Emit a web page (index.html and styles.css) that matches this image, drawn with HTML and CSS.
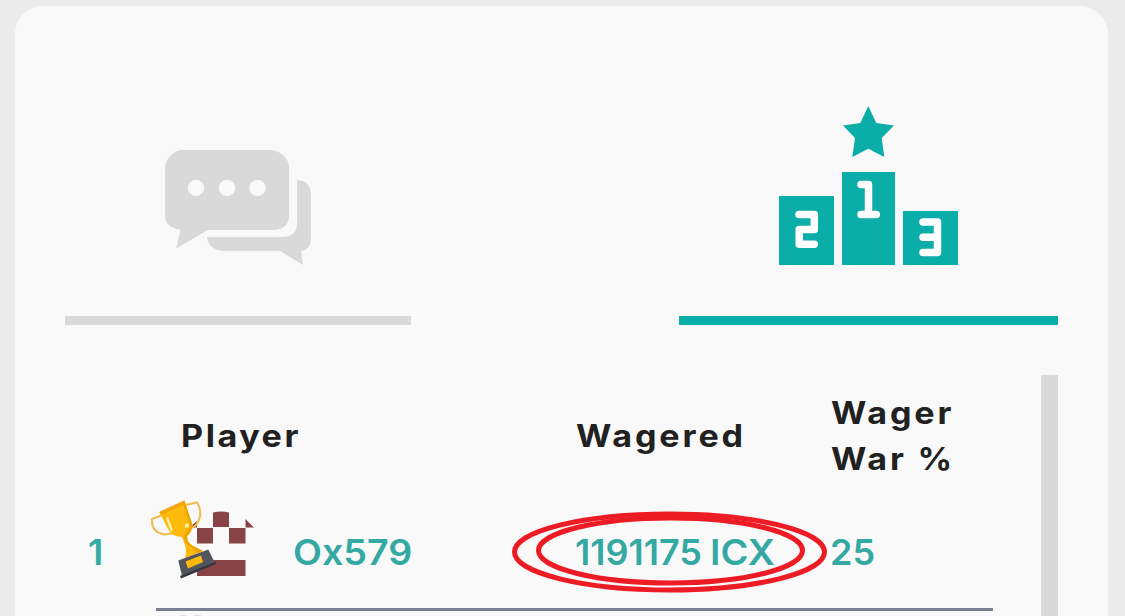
FILE: index.html
```html
<!DOCTYPE html>
<html lang="en">
<head>
<meta charset="utf-8">
<title>Leaderboard</title>
<link rel="stylesheet" href="styles.css">
</head>
<body>
<main class="card">
  <nav class="tabs">
    <a class="tab tab-chat">
      <svg class="icon" width="146" height="115" viewBox="0 0 146 115" fill="#d9d9d9">
        <path d="M17 0H107Q114 1 119 6Q124 11 124 17V66Q124 78 110 80H43L11 98.500L15.500 80Q0 77 0 66V17Q1 10 6 5Q11 0 17 0Z"/>
        <path d="M132 30Q146 31 146 45V89Q146 99 136 101L138 115L115 101H57Q43 99 42 87H119Q132 86 132 73Z"/>
        <g fill="#f9f9f9"><circle cx="31" cy="38" r="8.200"/><circle cx="62" cy="38" r="8.200"/><circle cx="92.500" cy="38" r="8.200"/></g>
      </svg>
    </a>
    <a class="tab tab-rank">
      <svg class="icon" width="179" height="159" viewBox="0 0 179 159" fill="#0bada9">
        <path d="M89.300 0L97.300 17L115 19.500L102.700 32L105.300 51L89.300 42.700L73.300 51L76 32L64 19.500L81.300 17Z"/>
        <path d="M0 90H55V159H0ZM63 66H116V159H63ZM124 105H179V159H124Z"/>
        <g fill="none" stroke="#fff" stroke-width="7.500" stroke-linecap="round" stroke-linejoin="round">
          <path d="M20 108.500H35.300V123.500H20.200V138.300H35.300"/>
          <path d="M82 78.500H89.500V108M82 108.500H97.300"/>
          <path d="M144 116H158.500V146.500H144M144 131.300H158"/>
        </g>
      </svg>
    </a>
  </nav>
  <section class="panel">
    <div class="table">
      <div class="row head">
        <span></span>
        <div class="cells">
          <span class="h-player">Player</span><span class="h-wagered">Wagered</span><span class="h-war">Wager<br>War %</span>
        </div>
      </div>
      <div class="row">
        <span class="rank">1</span>
        <div class="cells entry">
          <div class="player">
            <svg class="avatar" width="110" height="90" viewBox="0 0 110 90">
              <g fill="#884349">
                <path d="M66 18.500Q74 16.500 82 18.500V33H66ZM50 34H66V49.500H50ZM82 34H98.500V49.500H82ZM98.500 25L107 33.500H98.500ZM50 66H98.500V82H50ZM44 32L50 27V33.500H44Z"/>
              </g>
              <g fill="none" stroke="#f0bc4e" stroke-width="2">
                <path d="M14 21.500L5 25Q4 38 17 40.500L25 39.500M38.500 11L50 8.500Q57 20 49 31L45 34"/>
              </g>
              <path d="M12.300 18L37.300 6.500L45.500 31Q45 38 40 42Q40 49 46 52L56 57L38 65Q40 57 38 51L35 43Q25 43 21 35Z" fill="#fdba0c"/>
              <path d="M36 10L37.300 6.500L45.500 31Q45 38 40 42Q40 49 46 52L56 57L50 59Q44 52 38 48L36 42Q43 37 42 29Z" fill="#eea500"/>
              <path d="M12.300 18L37.300 6.500L38 10L14 21Z" fill="#f2a60c"/>
              <path d="M19 24L21 23L26 36L24 38Z" fill="#fff0a2"/>
              <circle cx="40" cy="31.500" r="2.200" fill="#fff0a2"/>
              <path d="M31.300 66.500L61.300 55.500L68 69L35 82Z" fill="#53565d"/>
              <path d="M33 82L69 67.500V70L34 84.500Z" fill="#36373d"/>
              <path d="M38.500 67.500L54 61.500L56 68L41 74.500Z" fill="#fdb90f"/>
            </svg>
            <span class="name">Ox579</span>
          </div>
          <div class="wagered">
            <span class="amount">1191175</span><span class="unit">ICX</span>
            <svg class="mark" width="317" height="83" viewBox="0 0 317 83" fill="none" stroke="#ed1c24" stroke-width="5">
              <ellipse cx="158.500" cy="41" rx="155" ry="38"/>
              <ellipse cx="159.500" cy="39.500" rx="132" ry="32.500"/>
            </svg>
          </div>
          <span class="percent">25</span>
        </div>
      </div>
      <div class="peek"><i></i><i></i></div>
    </div>
    <div class="scrollbar"></div>
  </section>
</main>
</body>
</html>
```
FILE: styles.css
```css
* { box-sizing: border-box; }
html { background: #ebebeb; }
body {
  margin: 0;
  height: 616px;
  padding: 6px 17px 0 15px;
  font-family: Inter, "Liberation Sans", sans-serif;
}
.card {
  height: 610px;
  padding: 0 50px;
  background: #f9f9f9;
  border-radius: 28px 28px 0 0;
}
.tabs {
  display: flex;
  justify-content: space-between;
  height: 319px;
}
.tab {
  display: flex;
  align-items: flex-end;
  padding: 0 100px 51px;
  border-bottom: 9px solid #d9d9d9;
}
.tab-rank { border-color: #0bada9; }
.icon { display: block; }
.panel {
  display: flex;
  margin-top: 50px;
  height: 241px;
}
.table { flex: 1; padding-right: 48px; }
.scrollbar { width: 17px; background: #d9d9d9; }
.row { display: grid; grid-template-columns: 91px 1fr; }
.cells {
  display: grid;
  grid-template-columns: 420px 255px 1fr;
  align-items: center;
}
.head {
  height: 122px;
  padding: 15px 0;
  color: #212121;
  font-size: 31px;
  font-weight: 700;
  line-height: 46px;
  letter-spacing: 2.6px;
}
.h-player, .h-wagered, .h-war {
  justify-self: start;
  transform: scaleX(1.1);
  transform-origin: left;
}
.h-player { margin-left: 25px; letter-spacing: 2.3px; }
.entry { height: 114px; padding-bottom: 2px; border-bottom: 3px solid #7a818e; }
.rank, .entry {
  color: #34a9a4;
  font-size: 36px;
  font-weight: 600;
  line-height: 44px;
}
.rank { padding: 33px 0 0 23px; }
.player { display: flex; align-items: center; height: 44px; }
.avatar { margin-left: -9px; margin-top: -25px; }
.name { margin-left: 36px; transform: scaleX(1.045); transform-origin: left; }
.wagered { position: relative; display: flex; gap: 8px; }
.amount { margin-left: -1px; }
.unit { transform: scaleX(1.05); transform-origin: left; }
.percent { margin-left: -1px; }
.mark { position: absolute; left: -65px; top: -19px; }
.peek { display: flex; gap: 7px; padding: 4px 0 0 115px; }
.peek i { width: 7px; height: 1px; background: #e2e2e2; }
```
